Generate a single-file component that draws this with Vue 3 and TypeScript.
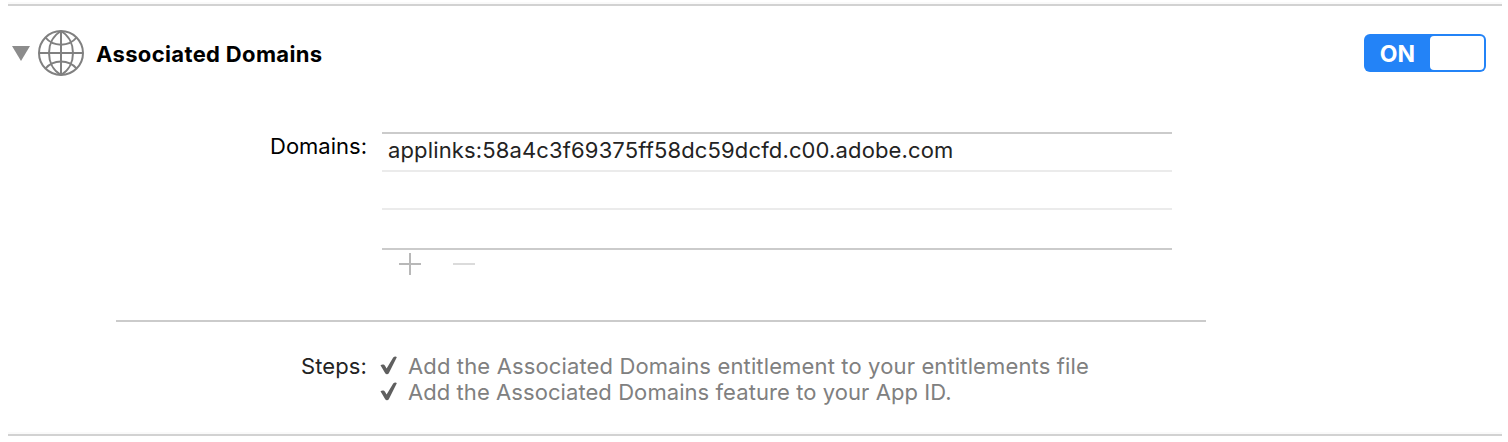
<script setup lang="ts">
import { ref } from 'vue'

const enabled = ref(true)
const expanded = ref(true)
const domains = ref<string[]>(['applinks:58a4c3f69375ff58dc59dcfd.c00.adobe.com', '', ''])
const steps = [
  { id: 'file', text: 'Add the Associated Domains entitlement to your entitlements file' },
  { id: 'appid', text: 'Add the Associated Domains feature to your App ID.' },
]
</script>

<template>
  <section class="capability">
    <header class="head">
      <svg class="triangle" width="18" height="15" viewBox="0 0 18 15" @click="expanded = !expanded">
        <path d="M0 0H18L9 15Z" fill="#8c8c8c" />
      </svg>
      <svg class="globe" width="46" height="46" viewBox="0 0 46 46" fill="none" stroke="#808080" stroke-width="2">
        <circle cx="23" cy="23" r="22" />
        <path d="M23 1V45M1 23H45" />
        <path d="M23 1C7 10 7 36 23 45M23 1C39 10 39 36 23 45" />
        <path d="M7.500 7.500C15 17 31 17 38.500 7.500M7.500 38.500C15 29 31 29 38.500 38.500" />
      </svg>
      <h2 class="title">Associated Domains</h2>
      <button class="toggle" type="button" @click="enabled = !enabled">
        <span class="toggle-label">ON</span>
        <span class="knob"></span>
      </button>
    </header>

    <div v-show="expanded">
      <div class="row domains">
        <span class="label">Domains:</span>
        <div class="list">
          <div v-for="(domain, i) in domains" :key="i" class="cell"><span class="domain">{{ domain }}</span></div>
        </div>
      </div>
      <div class="tools">
        <svg width="22" height="22" viewBox="0 0 22 22"><path d="M0 11H22M11 0V22" stroke="#b8b8b8" stroke-width="2" /></svg>
        <svg width="22" height="22" viewBox="0 0 22 22"><path d="M0 11H22" stroke="#dbdbdb" stroke-width="2" /></svg>
      </div>
      <hr class="divider" />
      <div class="row steps">
        <span class="label steps-label">Steps:</span>
        <ul class="step-list">
          <li v-for="step in steps" :key="step.id" class="step">
            <svg class="check" width="18" height="20" viewBox="0 0 18 20">
              <path d="M0.500 9.200C2 8 4.300 8.200 5 9.800L6.600 12.600L13.200 1.600C14.200 0.300 16.300 0 16.800 1.200L8.800 17.300C8 18.600 6 18.600 5.200 17.300Z" fill="#5f5f5f" />
            </svg>
            <span class="step-text" :class="step.id">{{ step.text }}</span>
          </li>
        </ul>
      </div>
    </div>
  </section>
</template>

<style>
body {
  background: #fff;
}
</style>

<style scoped>
.capability {
  box-sizing: border-box;
  width: 1494px;
  height: 432px;
  margin: 4px 0 0 8px;
  border-top: 2px solid #d2d2d2;
  border-bottom: 2px solid #d2d2d2;
  box-shadow: 0 -2px #fafafa, inset 0 -2px #fafafa;
  font: 22px/26px Inter, "Liberation Sans", sans-serif;
  color: #000;
}
.head {
  display: flex;
  align-items: center;
  height: 94px;
  padding: 0 16px 0 4px;
}
.triangle {
  margin-right: 8px;
}
.globe {
  margin-right: 12px;
}
.title {
  margin: 0 auto 0 0;
  padding-top: 2px;
  font-size: 22px;
  line-height: 26px;
  font-weight: 700;
  letter-spacing: 0.35px;
}
.toggle {
  display: flex;
  box-sizing: border-box;
  width: 122px;
  height: 38px;
  padding: 2px;
  border: 0;
  border-radius: 6px;
  background: #2383f7;
  font: 700 23px/36px Inter, sans-serif;
  color: #fff;
}
.toggle-label {
  width: 63px;
  margin-right: 1px;
  text-align: center;
}
.knob {
  width: 54px;
  height: 34px;
  border-radius: 4px;
  background: #fff;
}
.row {
  display: flex;
}
.domains {
  margin-top: 32px;
}
.label {
  width: 359px;
  margin-right: 15px;
  text-align: right;
}
.list {
  width: 790px;
  border-top: 2px solid #cbcbcb;
  border-bottom: 2px solid #cbcbcb;
}
.domains .label {
  padding-top: 1px;
}
.cell {
  box-sizing: border-box;
  height: 38px;
  padding: 3px 6px;
  border-bottom: 2px solid #ebebeb;
  color: #232323;
  white-space: nowrap;
  letter-spacing: 0.14px;
}
.cell:last-child {
  border-bottom: 0;
}
.tools {
  display: flex;
  gap: 32px;
  margin: 3px 0 0 391px;
  height: 22px;
}
.divider {
  width: 1090px;
  height: 2px;
  margin: 45px 0 0 108px;
  border: 0;
  background: #cbcbcb;
}
.steps {
  margin-top: 31px;
}
.steps-label {
  color: #232323;
  letter-spacing: 0.12px;
}
.step-list {
  margin: 0;
  padding: 0;
  list-style: none;
}
.step {
  display: flex;
  height: 26px;
  color: #808080;
  white-space: nowrap;
}
.step-text {
  letter-spacing: 0.14px;
}
.step-text.appid {
  letter-spacing: 0.07px;
}
.check {
  margin: 3px 10px 0 -2px;
}
</style>
